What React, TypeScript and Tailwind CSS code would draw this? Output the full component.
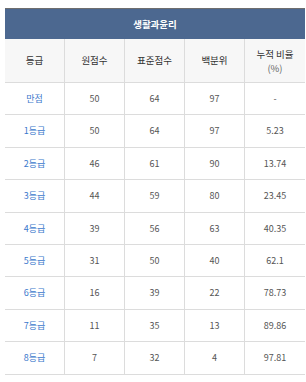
import React from 'react';

const rows: [string, string, string, string, string][] = [
  ['만점', '50', '64', '97', '-'],
  ['1등급', '50', '64', '97', '5.23'],
  ['2등급', '46', '61', '90', '13.74'],
  ['3등급', '44', '59', '80', '23.45'],
  ['4등급', '39', '56', '63', '40.35'],
  ['5등급', '31', '50', '40', '62.1'],
  ['6등급', '16', '39', '22', '78.73'],
  ['7등급', '11', '35', '13', '89.86'],
  ['8등급', '7', '32', '4', '97.81'],
];

const App: React.FC = () => {
  return (
    <div
      className="w-[306px] h-[382px] bg-white pl-[5px] pt-[8px] overflow-hidden"
      style={{ fontFamily: '"Noto Sans CJK KR", "Noto Sans", sans-serif' }}
    >
      <div className="w-[300px] border-t border-[#6e6e6e]">
        {/* Subject title bar */}
        <div className="h-[30px] bg-[#4c6890] flex items-center justify-center text-white text-[9.5px] font-bold">
          생활과윤리
        </div>

        {/* Column headers */}
        <div className="flex h-[44px] bg-[#f7f7f7] border-b border-[#dcdcdc] text-[9.5px] text-[#333]">
          {['등급', '원점수', '표준점수', '백분위'].map((h) => (
            <div key={h} className="w-[60px] flex items-center justify-center border-r border-[#dcdcdc]">
              {h}
            </div>
          ))}
          <div className="w-[60px] flex flex-col items-center justify-center leading-[14px]">
            <span>누적 비율</span>
            <span className="text-[#666]">(%)</span>
          </div>
        </div>

        {/* Data rows */}
        {rows.map((r) => (
          <div key={r[0]} className="flex h-[32.4px] border-b border-[#dcdcdc] text-[9px]">
            <div className="w-[60px] flex items-center justify-center border-r border-[#dcdcdc] text-[#3b78cc]">
              {r[0]}
            </div>
            {r.slice(1, 4).map((v, i) => (
              <div key={i} className="w-[60px] flex items-center justify-center border-r border-[#dcdcdc] text-[#555]">
                {v}
              </div>
            ))}
            <div className="w-[60px] flex items-center justify-center text-[#555]">{r[4]}</div>
          </div>
        ))}
      </div>
    </div>
  );
};

export default App;
